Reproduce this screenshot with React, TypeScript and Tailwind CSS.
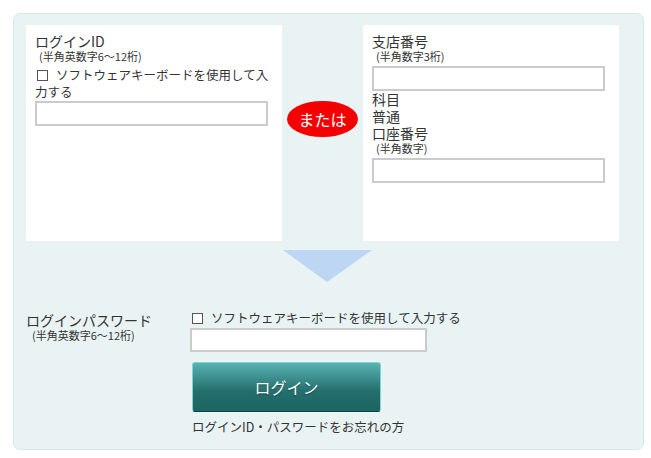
import React from "react";

const CheckLabel = ({ label }: { label: string }) => (
  <div className="text-[12.5px] leading-[17px] text-[#333]">
    <span className="inline-block w-[11px] h-[11px] border border-[#555] bg-white mr-[8px] ml-[2px] align-[-1px]" />
    {label}
  </div>
);

const Note = ({ children }: { children: React.ReactNode }) => (
  <div className="text-[11px] leading-[13px] text-[#333] pl-[4px]">{children}</div>
);

const TextBox = ({ className }: { className: string }) => (
  <div className={`border-2 border-[#cbcbcb] bg-white ${className}`} />
);

const App = () => {
  return (
    <div
      className="w-[651px] h-[458px] bg-white pt-[13px] pl-[13px]"
      style={{ fontFamily: '"Noto Sans CJK JP", "Noto Sans", sans-serif' }}
    >
      <div className="w-[631px] h-[437px] rounded-[7px] border border-[#d3eaeb] bg-[#e9f3f4] pl-[12px] pt-[11px]">
        <div className="flex">
          <div className="w-[256px] h-[216px] bg-white pl-[9px] pr-[12px] pt-[8px]">
            <div className="text-[14px] leading-[17px] text-[#333]">ログインID</div>
            <Note>(半角英数字6〜12桁)</Note>
            <div className="mt-[3px]">
              <CheckLabel label="ソフトウェアキーボードを使用して入力する" />
            </div>
            <TextBox className="mt-[1px] w-[233px] h-[25px]" />
          </div>

          <div className="w-[81px] flex justify-center pt-[76px]">
            <div className="w-[71px] h-[36px] rounded-[50%] bg-[#f40000] flex items-center justify-center text-white text-[16px] leading-none">
              または
            </div>
          </div>

          <div className="w-[256px] h-[216px] bg-white pl-[9px] pt-[8px]">
            <div className="text-[14px] leading-[17px] text-[#333]">支店番号</div>
            <Note>(半角数字3桁)</Note>
            <TextBox className="mt-[3px] w-[233px] h-[25px]" />
            <div className="text-[14px] leading-[17px] text-[#333]">
              <div>科目</div>
              <div>普通</div>
              <div>口座番号</div>
            </div>
            <Note>(半角数字)</Note>
            <TextBox className="mt-[3px] w-[233px] h-[25px]" />
          </div>
        </div>

        <div className="mt-[9px] pl-[257px]">
          <svg width="89" height="32" viewBox="0 0 89 32">
            <polygon points="0,0 89,0 44,32" fill="#bcd6f4" />
          </svg>
        </div>

        <div className="flex mt-[27px]">
          <div className="w-[164px] pt-[3px]">
            <div className="text-[14px] leading-[17px] text-[#333]">ログインパスワード</div>
            <div className="text-[11px] leading-[13px] text-[#333] pl-[6px]">(半角英数字6〜12桁)</div>
          </div>
          <div>
            <CheckLabel label="ソフトウェアキーボードを使用して入力する" />
            <TextBox className="mt-[2px] w-[237px] h-[24px]" />
            <button className="mt-[10px] ml-[2px] w-[189px] h-[50px] rounded-[3px] border border-[#7fd3d3] border-b-[#0d4544] bg-gradient-to-b from-[#57b3b1] via-[#236f6d] via-60% to-[#1a6462] text-white text-[16px] [text-shadow:0_1px_1px_rgba(0,0,0,0.4)]">
              ログイン
            </button>
            <div className="mt-[6px] ml-[2px] text-[12.5px] leading-[17px] text-[#333]">
              ログインID・パスワードをお忘れの方
            </div>
          </div>
        </div>
      </div>
    </div>
  );
};

export default App;
